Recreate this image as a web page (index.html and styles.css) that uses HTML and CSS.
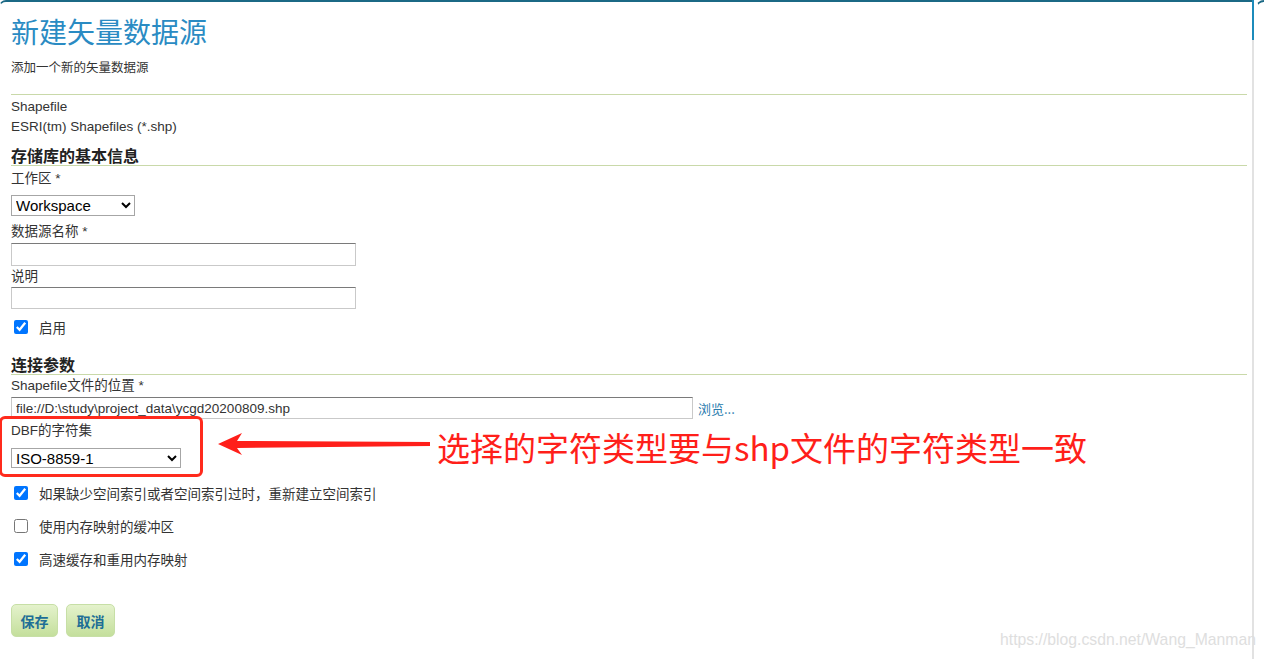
FILE: index.html
```html
<!DOCTYPE html>
<html lang="zh-CN">
<head>
    <meta charset="UTF-8">
    <meta name="viewport" content="width=device-width, initial-scale=1.0">
    <title>新建矢量数据源</title>
    <link rel="stylesheet" href="styles.css">
</head>
<body>
    <div class="page">
        <!-- 主面板 -->
        <div class="panel">
            <h1>新建矢量数据源</h1>
            <p class="lead">添加一个新的矢量数据源</p>

            <div class="store-type">
                <div>Shapefile</div>
                <div>ESRI(tm) Shapefiles (*.shp)</div>
            </div>

            <h3 class="section first">存储库的基本信息</h3>
            <div class="field-label ws-label">工作区 *</div>
            <select class="sel-workspace">
                <option>Workspace</option>
            </select>

            <div class="field-label name-label">数据源名称 *</div>
            <input type="text" class="txt txt-name">

            <div class="field-label">说明</div>
            <input type="text" class="txt txt-desc">

            <label class="check-row enabled-row">
                <input type="checkbox" checked>
                <span>启用</span>
            </label>

            <h3 class="section second">连接参数</h3>
            <div class="field-label">Shapefile文件的位置 *</div>
            <div class="url-row">
                <input type="text" class="txt txt-url" value="file://D:\study\project_data\ycgd20200809.shp">
                <a href="#" class="browse">浏览...</a>
            </div>

            <div class="field-label charset-label">DBF的字符集</div>
            <select class="sel-charset">
                <option>ISO-8859-1</option>
            </select>

            <label class="check-row opt-first">
                <input type="checkbox" checked>
                <span>如果缺少空间索引或者空间索引过时，重新建立空间索引</span>
            </label>
            <label class="check-row opt">
                <input type="checkbox">
                <span>使用内存映射的缓冲区</span>
            </label>
            <label class="check-row opt">
                <input type="checkbox" checked>
                <span>高速缓存和重用内存映射</span>
            </label>

            <div class="actions">
                <button class="btn btn-save">保存</button>
                <button class="btn btn-cancel">取消</button>
            </div>
        </div>
        <div class="rail"></div>
        <div class="side"></div>

        <!-- 标注 -->
        <div class="mark-box"></div>
        <svg class="mark-arrow" width="220" height="30" viewBox="0 0 220 30">
            <polygon points="0,14 24,3 19,11 212,12 212,16 19,18 24,25" fill="#ff1f1a"/>
        </svg>
        <div class="mark-text">选择的字符类型要与shp文件的字符类型一致</div>
        <div class="watermark">https://blog.csdn.net/Wang_Manman</div>
    </div>
</body>
</html>
```

FILE: styles.css
```css
body {
    margin: 0;
    padding: 0;
    font-family: "Liberation Sans", "Noto Sans CJK SC", sans-serif;
    font-size: 13.5px;
    color: #333;
    background: #fff;
}

.page {
    position: relative;
    display: flex;
    height: 659px;
    overflow: hidden;
}

.panel {
    width: 1236px;
    padding: 0 5px 0 11px;
    border-top: 2px solid #1b6985;
    border-left: 1px solid transparent;
    border-top-left-radius: 7px;
    margin-left: -1px;
}

.rail {
    width: 2px;
    background: linear-gradient(#1c8bbb 0, #1c8bbb 40px, #e2e2e2 40px);
}

.side {
    flex: 1;
    margin-left: 2px;
    border-top: 2px solid #1b6985;
    border-left: 1px solid transparent;
    border-top-left-radius: 8px;
}

h1 {
    margin: 11px 0 0;
    font-family: "Noto Sans CJK SC", sans-serif;
    font-size: 28px;
    font-weight: normal;
    line-height: 36px;
    color: #2a8bc3;
}

.lead {
    margin: 9px 0 0;
    font-family: "Noto Sans CJK SC", sans-serif;
    font-size: 12.5px;
    line-height: 18px;
}

.store-type {
    margin-top: 18px;
    padding-top: 2px;
    border-top: 1px solid #c9d9a9;
    line-height: 20px;
}

.section {
    margin: 8px 0 0;
    font-family: "Noto Sans CJK SC", sans-serif;
    font-size: 16px;
    font-weight: bold;
    line-height: 20px;
    color: #222;
    border-bottom: 1px solid #c9d9a9;
}

.section.second {
    margin-top: 17px;
}

.field-label {
    line-height: 20px;
    margin-top: 1px;
}

.ws-label {
    margin-top: 3px;
}

.name-label {
    margin-top: 6px;
}

.charset-label {
    margin-top: 2px;
}

select {
    display: block;
    font-family: "Liberation Sans", sans-serif;
    font-size: 15px;
    color: #000;
    background: #fff;
    border: 1px solid #a6a6a6;
    border-radius: 0;
    padding: 0;
}

.sel-workspace {
    margin-top: 6px;
    width: 124px;
    height: 21px;
}

.sel-charset {
    margin-top: 7px;
    width: 170px;
    height: 20px;
}

.txt {
    display: block;
    box-sizing: border-box;
    border: 1px solid #c9c9c9;
    border-top-color: #7a7a7a;
    border-radius: 0;
    padding: 0 4px;
    font-family: "Liberation Sans", sans-serif;
    font-size: 13.5px;
    color: #333;
    margin: 1px 0 0;
}

.txt-name {
    width: 345px;
    height: 23px;
}

.txt-desc {
    width: 345px;
    height: 22px;
    margin-top: 0;
}

.url-row {
    display: flex;
    align-items: center;
    gap: 5px;
    margin-top: 1px;
}

.txt-url {
    width: 682px;
    height: 22px;
    margin: 0;
}

.browse {
    color: #2a7cae;
    text-decoration: none;
    font-family: "Noto Sans CJK SC", sans-serif;
    font-size: 13px;
}

.check-row {
    display: flex;
    align-items: center;
    gap: 11px;
    height: 20px;
    font-family: "Noto Sans CJK SC", sans-serif;
    font-size: 13.5px;
}

.check-row input {
    width: 14px;
    height: 14px;
    margin: 0 0 0 3px;
}

.enabled-row {
    margin-top: 8px;
}

.opt-first {
    margin-top: 15px;
}

.opt {
    margin-top: 13px;
}

.actions {
    display: flex;
    gap: 8px;
    margin-top: 35px;
}

.btn {
    height: 33px;
    padding: 0;
    border: 1px solid #c7dfa6;
    border-radius: 5px;
    background: linear-gradient(#e4f2cc, #c4df9c);
    font-family: "Noto Sans CJK SC", sans-serif;
    font-size: 14px;
    font-weight: bold;
    color: #1e6e96;
    cursor: pointer;
}

.btn-save {
    width: 47px;
}

.btn-cancel {
    width: 49px;
}

/* 标注层 */
.mark-box {
    position: absolute;
    left: -1px;
    top: 416px;
    width: 198px;
    height: 55px;
    border: 3px solid #ff2a1c;
    border-radius: 6px;
}

.mark-arrow {
    position: absolute;
    left: 218px;
    top: 430px;
}

.mark-text {
    position: absolute;
    left: 437px;
    top: 426px;
    font-family: "Noto Sans CJK SC", sans-serif;
    font-size: 33px;
    line-height: 42px;
    color: #ff1f1a;
    white-space: nowrap;
}

.watermark {
    position: absolute;
    left: 1000px;
    top: 630px;
    font-family: "Liberation Sans", sans-serif;
    font-size: 15.75px;
    line-height: 20px;
    color: #dedede;
    white-space: nowrap;
}
```
